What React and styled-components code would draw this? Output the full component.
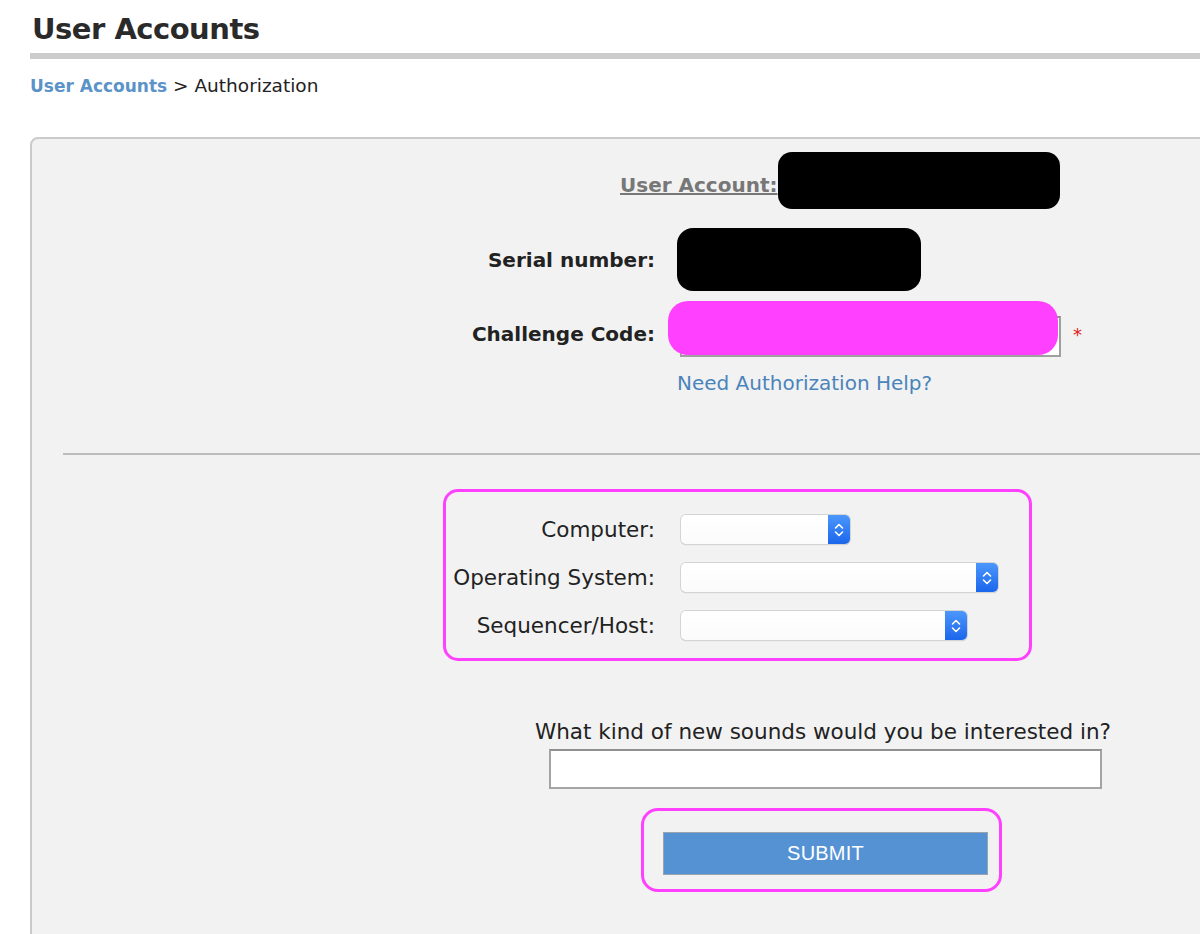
import styled, { createGlobalStyle } from "styled-components";

const GlobalStyle = createGlobalStyle`
  html, body {
    margin: 0;
    padding: 0;
    background: #ffffff;
    font-family: "DejaVu Sans", "Noto Sans", sans-serif;
    color: #222222;
  }
`;

const Page = styled.div`
  padding: 12px 0 0 30px;
  overflow: hidden;
  height: 934px;
  box-sizing: border-box;
`;

const Title = styled.h1`
  margin: 0 0 7px 2px;
  font-size: 29px;
  line-height: 34px;
  font-weight: bold;
  letter-spacing: -0.5px;
  color: #2a2a2a;
`;

const TitleBar = styled.div`
  height: 6px;
  background: #cccccc;
`;

const Crumbs = styled.div`
  margin-top: 16px;
  font-size: 18.5px;
  line-height: 22px;
  color: #222;
`;

const CrumbLink = styled.a`
  color: #5b93c9;
  font-weight: bold;
  font-size: 17px;
  text-decoration: none;
`;

const Panel = styled.div`
  margin-top: 40px;
  margin-right: -20px;
  min-height: 900px;
  background: #f2f2f2;
  border: 2px solid #cacaca;
  border-top-left-radius: 8px;
  padding-top: 13px;
`;

const AccountRow = styled.div`
  display: flex;
  align-items: flex-start;
  padding-left: 588px;
`;

const AccountLabel = styled.a`
  margin-top: 21px;
  font-size: 20px;
  line-height: 24px;
  font-weight: bold;
  color: #777777;
  text-decoration: underline;
`;

const Redacted = styled.div`
  width: ${(p) => p.$w}px;
  height: ${(p) => p.$h}px;
  border-radius: ${(p) => p.$r}px;
  background: #000;
`;

const FieldGrid = styled.div`
  display: grid;
  grid-template-columns: 623px 1fr;
  column-gap: 22px;
  align-items: center;
  margin-top: ${(p) => p.$top || 0}px;
`;

const BoldLabel = styled.div`
  text-align: right;
  font-size: 20px;
  line-height: 24px;
  font-weight: bold;
  color: #222;
  padding-bottom: ${(p) => p.$lift || 0}px;
`;

const FieldCell = styled.div`
  display: flex;
  align-items: center;
`;

const InputWrap = styled.div`
  position: relative;
  margin-left: 3px;
`;

const CodeInput = styled.input`
  display: block;
  width: 381px;
  height: 41px;
  box-sizing: border-box;
  border: 2px solid #a0a0a0;
  border-top-color: #8c8c8c;
  background: #fff;
  outline: none;
`;

const Highlight = styled.div`
  position: absolute;
  left: -12px;
  top: -15px;
  width: 390px;
  height: 54px;
  border-radius: 20px;
  background: #ff40ff;
`;

const Required = styled.span`
  margin-left: 12px;
  margin-top: -5px;
  color: #e02020;
  font-size: 18px;
`;

const HelpLink = styled.a`
  display: block;
  margin: 14px 0 0 645px;
  font-size: 20px;
  line-height: 24px;
  color: #4a84bb;
  text-decoration: none;
`;

const Divider = styled.hr`
  margin: 58px 0 0 31px;
  border: none;
  height: 2px;
  background: #bcbcbc;
`;

const MarkBox = styled.div`
  box-sizing: border-box;
  border: 3px solid #ff40ff;
  border-radius: 15px;
`;

const SystemBox = styled(MarkBox)`
  margin: 34px 0 0 411px;
  width: 589px;
  padding: 23px 0 18px;
  display: grid;
  grid-template-columns: 209px 1fr;
  grid-auto-rows: 29px;
  column-gap: 26px;
  row-gap: 19px;
  align-items: center;
`;

const Label = styled.div`
  text-align: right;
  font-size: 21.5px;
  line-height: 26px;
  color: #222;
`;

const SelectBox = styled.div`
  display: flex;
  width: ${(p) => p.$w}px;
  height: 29px;
  border-radius: 5px;
  background: linear-gradient(#ffffff, #fbfbfb);
  box-shadow: 0 0 0 1px #d4d4d4, 0 1px 1px rgba(0, 0, 0, 0.25);
  overflow: hidden;
`;

const SelectText = styled.div`
  flex: 1;
`;

const SelectCap = styled.div`
  width: 22px;
  display: flex;
  align-items: center;
  justify-content: center;
  background: linear-gradient(#4b97fb, #1c66ec);
`;

const Question = styled.div`
  margin: 58px 0 0 491px;
  width: 600px;
  display: flex;
  flex-direction: column;
  align-items: center;
`;

const QuestionText = styled.div`
  font-size: 21.5px;
  line-height: 26px;
  color: #222;
`;

const SoundsInput = styled.input`
  display: block;
  margin: 4px 0 0 5px;
  width: 553px;
  height: 40px;
  box-sizing: border-box;
  border: 2px solid #a4a4a4;
  border-top-color: #909090;
  background: #fff;
  outline: none;
`;

const SubmitBox = styled(MarkBox)`
  margin: 19px 0 0 -3px;
  width: 361px;
  padding: 21px 11px 14px 19px;
  border-radius: 17px;
`;

const SubmitButton = styled.button`
  display: block;
  width: 325px;
  height: 43px;
  border: 1px solid #9aa4ae;
  background: #5592d4;
  color: #fff;
  font-family: "Liberation Sans", Arial, sans-serif;
  font-size: 20px;
  letter-spacing: 0.2px;
`;

function Chevrons() {
  return (
    <svg width="10" height="16" viewBox="0 0 10 16">
      <path
        d="M1.5 6 L5 2.5 L8.5 6 M1.5 10 L5 13.5 L8.5 10"
        fill="none"
        stroke="#fff"
        strokeWidth="1.6"
        strokeLinecap="round"
        strokeLinejoin="round"
      />
    </svg>
  );
}

function Select({ width }) {
  return (
    <SelectBox $w={width}>
      <SelectText />
      <SelectCap>
        <Chevrons />
      </SelectCap>
    </SelectBox>
  );
}

export default function App() {
  return (
    <>
      <GlobalStyle />
      <Page>
        <Title>User Accounts</Title>
        <TitleBar />
        <Crumbs>
          <CrumbLink href="#">User Accounts</CrumbLink> &gt; Authorization
        </Crumbs>

        <Panel>
          <AccountRow>
            <AccountLabel href="#">User Account:</AccountLabel>
            <Redacted $w={282} $h={57} $r={14} />
          </AccountRow>

          <FieldGrid $top={19}>
            <BoldLabel>Serial number:</BoldLabel>
            <FieldCell>
              <Redacted $w={244} $h={63} $r={16} />
            </FieldCell>
          </FieldGrid>

          <FieldGrid $top={25}>
            <BoldLabel $lift={6}>Challenge Code:</BoldLabel>
            <FieldCell>
              <InputWrap>
                <CodeInput type="text" />
                <Highlight />
              </InputWrap>
              <Required>*</Required>
            </FieldCell>
          </FieldGrid>

          <HelpLink href="#">Need Authorization Help?</HelpLink>

          <Divider />

          <SystemBox>
            <Label>Computer:</Label>
            <Select width={169} />
            <Label>Operating System:</Label>
            <Select width={317} />
            <Label>Sequencer/Host:</Label>
            <Select width={286} />
          </SystemBox>

          <Question>
            <QuestionText>What kind of new sounds would you be interested in?</QuestionText>
            <SoundsInput type="text" />
            <SubmitBox>
              <SubmitButton>SUBMIT</SubmitButton>
            </SubmitBox>
          </Question>
        </Panel>
      </Page>
    </>
  );
}
